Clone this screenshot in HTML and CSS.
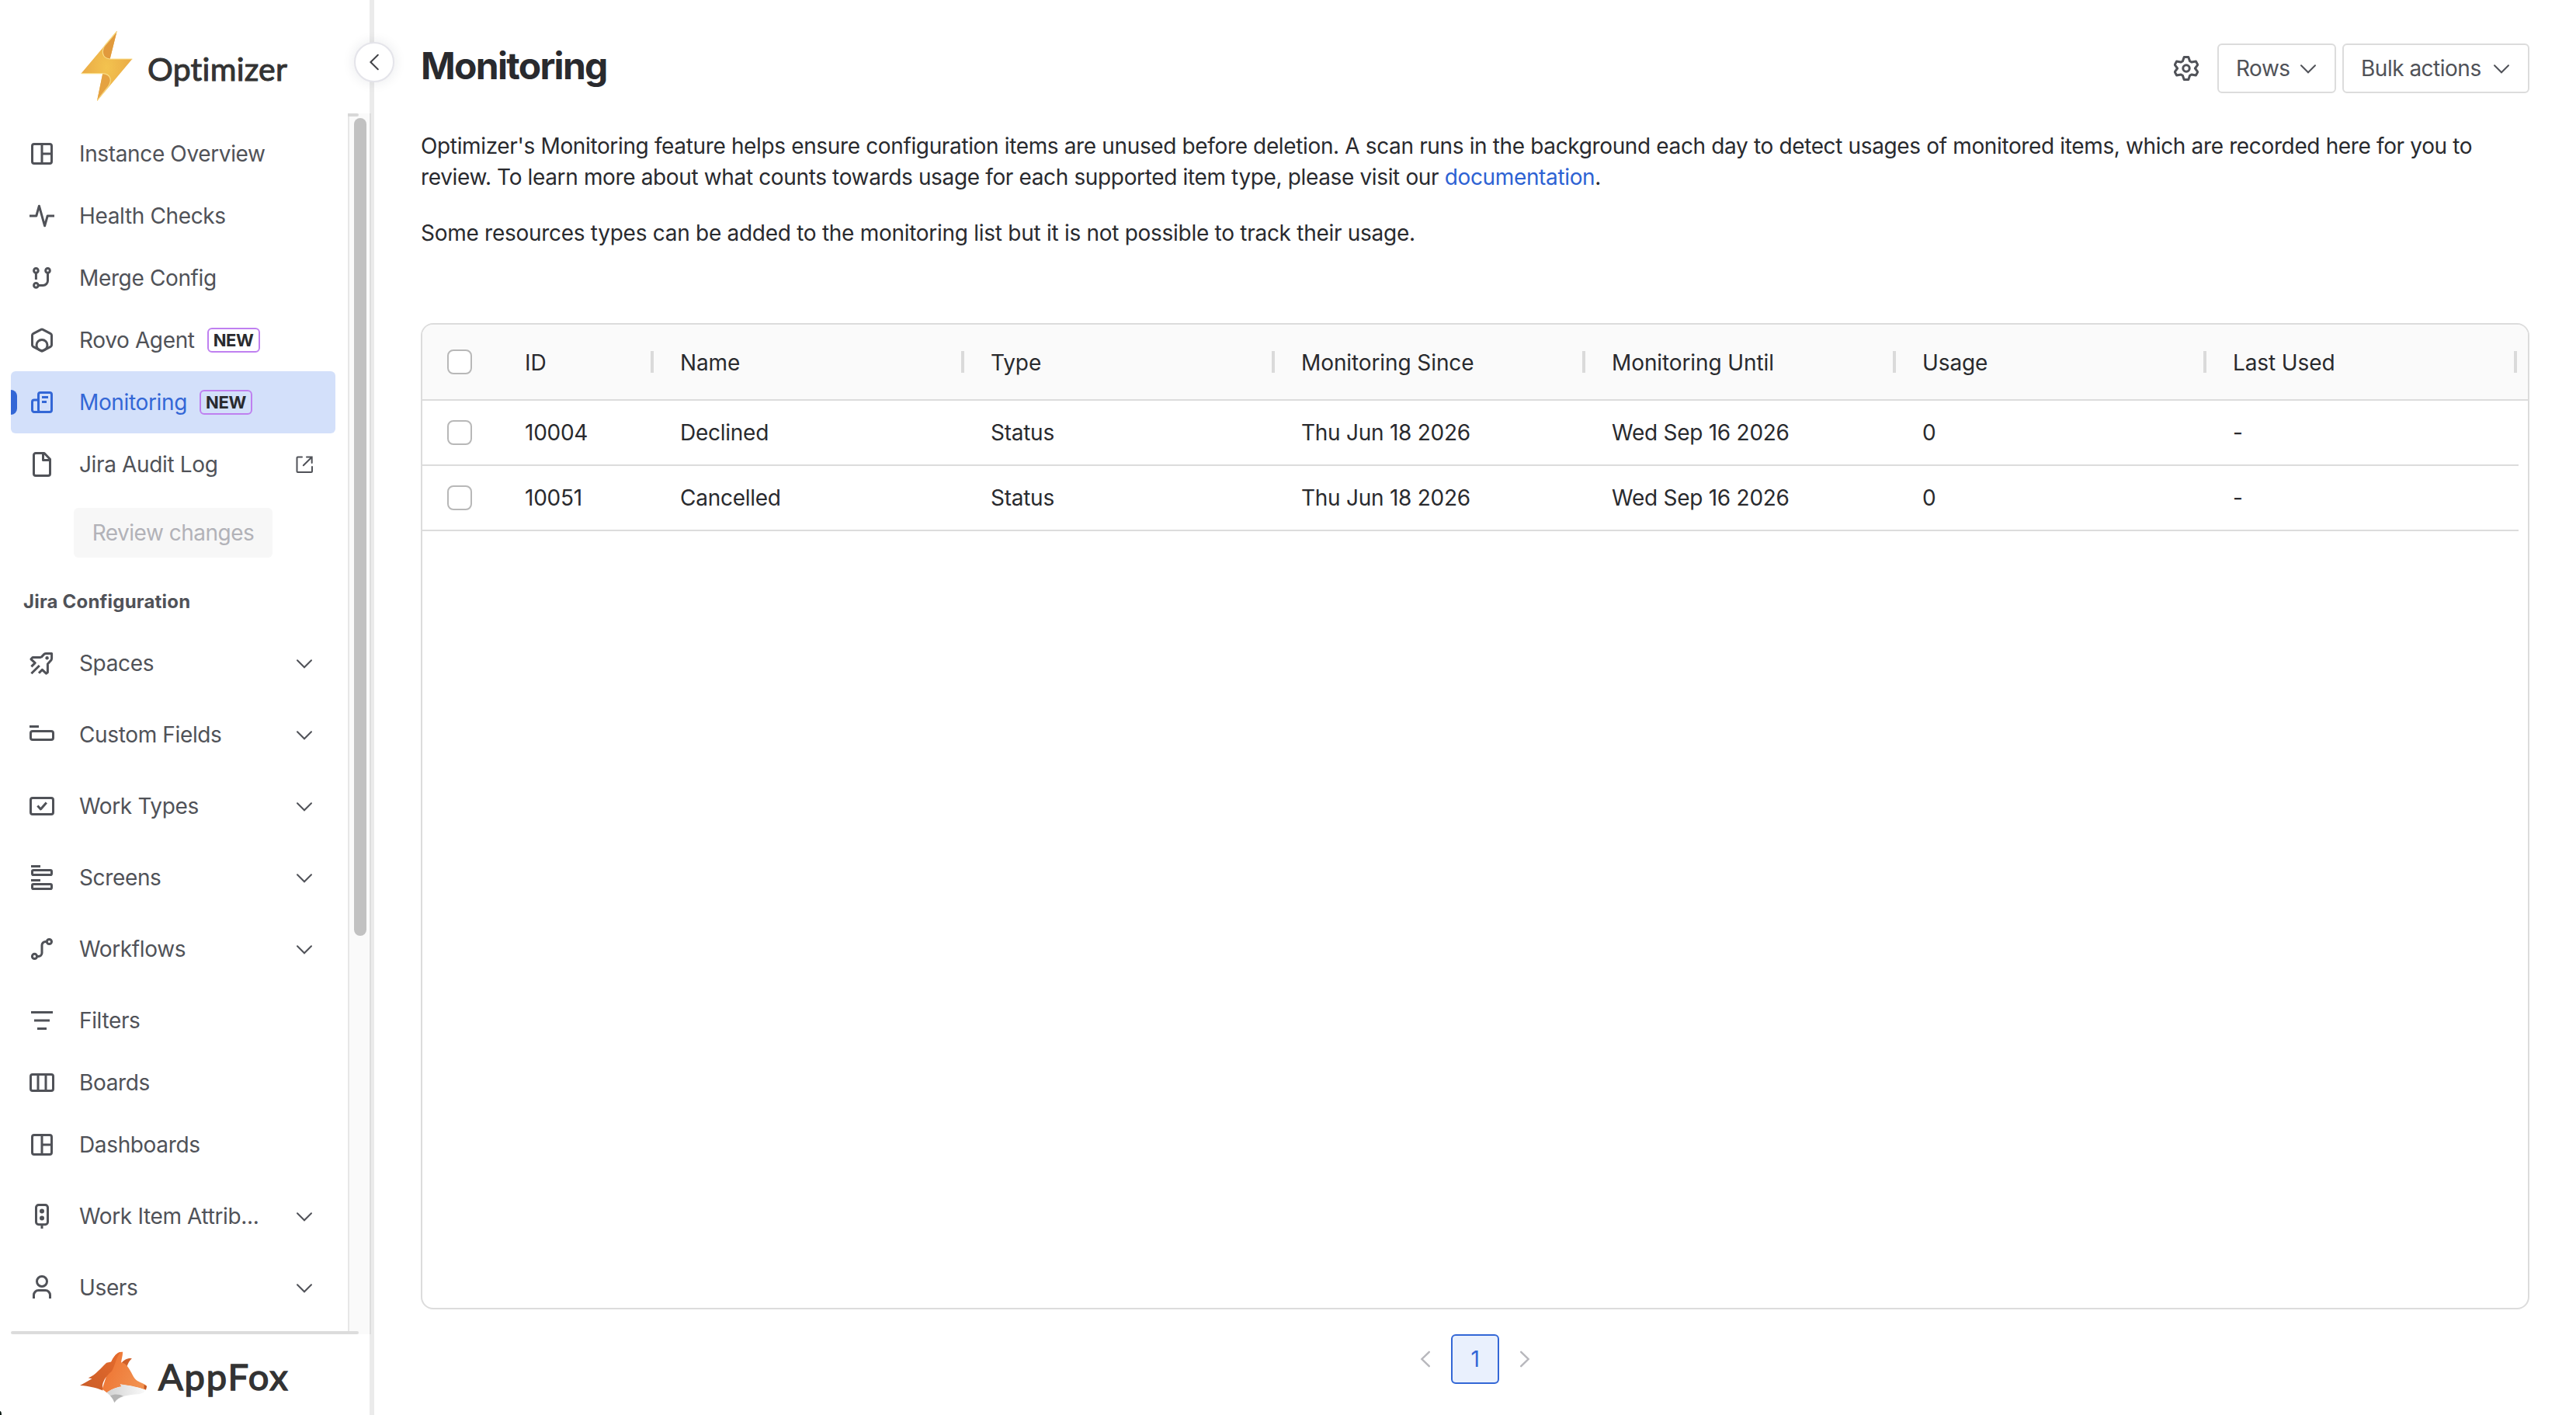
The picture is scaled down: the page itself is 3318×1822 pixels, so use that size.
FILE: index.html
```
<!DOCTYPE html>
<html lang="en">
<head>
  <meta charset="UTF-8">
  <meta name="viewport" content="width=device-width, initial-scale=1">
  <title>Monitoring - Optimizer</title>
  <link rel="stylesheet" href="styles.css">
</head>
<body>
  <!-- Shared icons -->
  <svg class="sprite" aria-hidden="true">
    <symbol id="i-dashboard" viewBox="0 0 16 16"><rect x="1.75" y="1.75" width="12.5" height="12.5" rx="1.25"/><path d="M8 2v12M8 8h6"/></symbol>
    <symbol id="i-down" viewBox="0 0 24 24"><path d="M3 8.3l9 9 9-9"/></symbol>
    <symbol id="i-left" viewBox="0 0 24 24"><path d="M16.8 2.8 7.4 12l9.4 9.2"/></symbol>
    <symbol id="i-right" viewBox="0 0 24 24"><path d="M7.2 2.8l9.4 9.2-9.4 9.2"/></symbol>
  </svg>

  <div class="app">
    <!-- Sidebar -->
    <aside class="sidebar">
      <div class="brand">
        <svg class="bolt" viewBox="0 0 68 90">
          <defs>
            <radialGradient id="boltFill" cx="0.5" cy="0.52" r="0.55">
              <stop offset="0" stop-color="#f3c34f"/>
              <stop offset="1" stop-color="#e9a845"/>
            </radialGradient>
          </defs>
          <path fill="url(#boltFill)" d="M46.6 0 37.6 36H66.3L21 90l7.3-35.4H.6z"/>
          <path fill="#e19a3d" d="M46.6 0 37.6 36C27 35 26.5 24 31 18.5z"/>
          <path fill="#e5a241" d="M28.3 54.6C38 55 41 63 35.5 71L21 90z"/>
          <path fill="none" stroke="#f9dc84" stroke-width="1.2" d="M46 1 32 17.5C26 25 27 35 37.6 36H66M1 54.6H28.3C38 55 41 63 35.5 71L21.5 89"/>
        </svg>
        <span class="brand-name">Optimizer</span>
      </div>

      <div class="menu-area">
        <nav class="menu">
          <a class="item"><svg class="icon"><use href="#i-dashboard"/></svg><span class="label">Instance Overview</span></a>
          <a class="item"><svg class="icon" viewBox="0 0 16 16"><path d="M0 8h4.4L6.2 1.6 9.8 14.4 11.6 8H16"/></svg><span class="label">Health Checks</span></a>
          <a class="item"><svg class="icon" viewBox="0 0 16 16"><circle cx="4.2" cy="3.2" r="1.4"/><circle cx="11.75" cy="3.2" r="1.4"/><circle cx="4.2" cy="12.7" r="1.4"/><path d="M4.2 4.8V9M11.75 4.8v4.9a3 3 0 0 1-3 3H5.8"/></svg><span class="label">Merge Config</span></a>
          <a class="item"><svg class="icon" viewBox="0 0 16 16"><path d="M7.4 1.2a1.2 1.2 0 0 1 1.2 0l5 2.6a1.2 1.2 0 0 1 .65 1.1v6.2a1.2 1.2 0 0 1-.65 1.1l-5 2.7a1.2 1.2 0 0 1-1.2 0l-5-2.7a1.2 1.2 0 0 1-.65-1.1V4.9a1.2 1.2 0 0 1 .65-1.1z"/><circle cx="8" cy="11.2" r="3.5"/></svg><span class="label">Rovo Agent</span><span class="tag">NEW</span></a>
          <a class="item selected"><svg class="icon" viewBox="0 0 16 16"><rect x="5.75" y="1.75" width="8.5" height="12.5" rx="1.25"/><path d="M5.75 6.45H3A1.25 1.25 0 0 0 1.75 7.7V13A1.25 1.25 0 0 0 3 14.25h4M8 4.75h4M8 7.75h3"/></svg><span class="label">Monitoring</span><span class="tag">NEW</span></a>
          <a class="item"><svg class="icon" viewBox="0 0 16 16"><path d="M9.5.75H4A1.25 1.25 0 0 0 2.75 2v12A1.25 1.25 0 0 0 4 15.25h8A1.25 1.25 0 0 0 13.25 14V4.6zM8.75 1v4.25H13"/></svg><span class="label">Jira Audit Log</span><svg class="end-icon" viewBox="0 0 24 24"><path d="M9 2.5H3.5A1 1 0 0 0 2.5 3.5V21a1 1 0 0 0 1 1H21a1 1 0 0 0 1-1V15M15 2.5h6.7V10M10.8 13.3 21.5 2.7"/></svg></a>
          <button class="review" disabled>Review changes</button>
          <h2 class="menu-heading">Jira Configuration</h2>
          <a class="item group"><svg class="icon" viewBox="0 0 16 16"><path d="M7.4 4.3 9.4 2.2a1.8 1.8 0 0 1 1.3-.5h3.6v3.2a2 2 0 0 1-.6 1.4l-2 2.2v5.4l-1 .7-2.5-2.4-2.2 2.2M7.4 4.3H2L1 5.4l2.6 2.4-2.4 2.4M6.4 9.5l-5.2 5.1"/><circle class="dot" cx="11.3" cy="4.6" r="1.1"/></svg><span class="label">Spaces</span><svg class="end-icon"><use href="#i-down"/></svg></a>
          <a class="item group"><svg class="icon" viewBox="0 0 16 16"><path d="M0 2.75h6"/><rect x=".75" y="5.75" width="14.5" height="5.5" rx="1.25"/></svg><span class="label">Custom Fields</span><svg class="end-icon"><use href="#i-down"/></svg></a>
          <a class="item group"><svg class="icon" viewBox="0 0 16 16"><rect x=".75" y="2.75" width="14.5" height="10.5" rx="1.25"/><path d="M5.2 7.8l2 2.2L10.9 5.7"/></svg><span class="label">Work Types</span><svg class="end-icon"><use href="#i-down"/></svg></a>
          <a class="item group"><svg class="icon" viewBox="0 0 16 16"><path d="M1 .75h6M1 9.75h6"/><rect x="1.75" y="3.25" width="12.5" height="3" rx=".8"/><rect x="1.75" y="12.25" width="12.5" height="3" rx=".8"/></svg><span class="label">Screens</span><svg class="end-icon"><use href="#i-down"/></svg></a>
          <a class="item group"><svg class="icon" viewBox="0 0 16 16"><circle cx="12.7" cy="3.25" r="1.55"/><circle cx="3.25" cy="12.7" r="1.55"/><path d="M11.2 3.25h-.9A2.3 2.3 0 0 0 8 5.55v4.9a2.25 2.25 0 0 1-2.25 2.25H4.8"/></svg><span class="label">Workflows</span><svg class="end-icon"><use href="#i-down"/></svg></a>
          <a class="item"><svg class="icon" viewBox="0 0 16 16"><path d="M1 2.75h14M3 8h10M5 13.25h6"/></svg><span class="label">Filters</span></a>
          <a class="item"><svg class="icon" viewBox="0 0 16 16"><rect x=".75" y="2.75" width="14.5" height="10.5" rx="1.25"/><path d="M5.5 3v10M10.5 3v10"/></svg><span class="label">Boards</span></a>
          <a class="item"><svg class="icon"><use href="#i-dashboard"/></svg><span class="label">Dashboards</span></a>
          <a class="item group"><svg class="icon" viewBox="0 0 16 16"><rect x="4.25" y=".75" width="7.5" height="12.6" rx="1.6"/><circle class="dot" cx="8" cy="4.7" r="1.5"/><circle class="dot" cx="8" cy="9.2" r="1.5"/><path d="M8 13.4V16"/></svg><span class="label">Work Item Attrib...</span><svg class="end-icon"><use href="#i-down"/></svg></a>
          <a class="item group"><svg class="icon" viewBox="0 0 16 16"><circle cx="8" cy="4" r="3.25"/><path d="M2.75 15v-2.2a3 3 0 0 1 3-3h4.5a3 3 0 0 1 3 3V15"/></svg><span class="label">Users</span><svg class="end-icon"><use href="#i-down"/></svg></a>
        </nav>
        <div class="scrollbar"><div class="thumb"></div></div>
      </div>

      <div class="vendor">
        <svg class="fox" viewBox="310 722 256 196">
          <defs>
            <linearGradient id="foxFace" x1="0" x2="1" y1="0" y2="0.4">
              <stop offset="0" stop-color="#ee6f2d"/>
              <stop offset="1" stop-color="#f19150"/>
            </linearGradient>
            <linearGradient id="foxBack" x1="1" x2="0" y1="0" y2="1">
              <stop offset="0" stop-color="#e66b2c"/>
              <stop offset="1" stop-color="#c95c28"/>
            </linearGradient>
            <linearGradient id="foxJaw" x1="0" x2="1" y1="0" y2="0">
              <stop offset="0" stop-color="#d2d2d2"/>
              <stop offset="1" stop-color="#fafafa"/>
            </linearGradient>
          </defs>
          <path fill="#cf6029" d="M468 768C478 754 494 746 509 749c-10 8-14 18-19 30z"/>
          <path fill="url(#foxFace)" d="M430 762C440 740 455 722 474 724c0 16-5 28-6 40 10 2 18 6 24 16 16 19 22 46 38 55 16 9 30 12 36 20l-4 15c-26-10-60-16-98-22l6 9c-22 2-42 12-57 23l-18-14z"/>
          <path fill="url(#foxBack)" d="M310 853l46-26-14-3c30-12 48-39 70-58l18-4c10-22 22-36 36-38-20 26-20 50-34 74-24 20-42 46-34 74-26-10-52-17-88-19z"/>
          <path fill="#c25621" d="M556 850l10 6-3 14-7-5z"/>
          <path fill="url(#foxJaw)" d="M413 880c15-11 35-21 57-23l-6-9c36 4 72 10 98 22-6 9-12 15-30 16-34 2-70 6-90 32-4-14-16-28-29-38z"/>
          <path fill="#b4b4b4" d="M426 892c18-8 36-6 50 2-14 4-26 12-34 24-4-10-8-18-16-26z"/>
        </svg>
        <span class="vendor-name">AppFox</span>
      </div>
      <button class="collapse"><svg><use href="#i-left"/></svg></button>
      <span class="corner"></span>
    </aside>

    <!-- Content -->
    <main class="content">
      <header class="page-header">
        <h1>Monitoring</h1>
        <div class="actions">
          <svg class="icon gear" viewBox="0 0 16 16"><circle cx="8" cy="8" r="2.1"/><path d="M6.6.75h2.8l.9 2.6 1.1.65 2.8-.5 1.2 2.2L13.7 8l1.7 2.3-1.2 2.2-2.8-.5-1.1.65-.9 2.6H6.6l-.9-2.6-1.1-.65-2.8.5L.6 10.3 2.3 8 .6 5.7l1.2-2.2 2.8.5 1.1-.65z"/></svg>
          <button class="btn rows">Rows <svg><use href="#i-down"/></svg></button>
          <button class="btn bulk">Bulk actions <svg><use href="#i-down"/></svg></button>
        </div>
      </header>

      <div class="intro">
        <p>Optimizer's Monitoring feature helps ensure configuration items are unused before deletion. A scan runs in the background each day to detect usages of monitored items, which are recorded here for you to<br>review. To learn more about what counts towards usage for each supported item type, please visit our <a class="link">documentation</a>.</p>
        <p>Some resources types can be added to the monitoring list but it is not possible to track their usage.</p>
      </div>

      <div class="grid">
        <div class="row head">
          <div class="cell check"><span class="checkbox"></span></div>
          <div class="cell">ID</div>
          <div class="cell">Name</div>
          <div class="cell">Type</div>
          <div class="cell">Monitoring Since</div>
          <div class="cell">Monitoring Until</div>
          <div class="cell">Usage</div>
          <div class="cell">Last Used</div>
        </div>
        <div class="row">
          <div class="cell check"><span class="checkbox"></span></div>
          <div class="cell">10004</div>
          <div class="cell">Declined</div>
          <div class="cell">Status</div>
          <div class="cell">Thu Jun 18 2026</div>
          <div class="cell">Wed Sep 16 2026</div>
          <div class="cell">0</div>
          <div class="cell">-</div>
        </div>
        <div class="row">
          <div class="cell check"><span class="checkbox"></span></div>
          <div class="cell">10051</div>
          <div class="cell">Cancelled</div>
          <div class="cell">Status</div>
          <div class="cell">Thu Jun 18 2026</div>
          <div class="cell">Wed Sep 16 2026</div>
          <div class="cell">0</div>
          <div class="cell">-</div>
        </div>
      </div>

      <div class="pagination">
        <svg><use href="#i-left"/></svg>
        <span class="page">1</span>
        <svg><use href="#i-right"/></svg>
      </div>
    </main>
  </div>
</body>
</html>
```
FILE: styles.css
```
* {
  margin: 0;
  padding: 0;
  box-sizing: border-box;
}

html, body {
  height: 100%;
  overflow: hidden;
}

body {
  font-family: Inter, "Liberation Sans", sans-serif;
  font-size: 28px;
  line-height: 40px;
  letter-spacing: -0.36px;
  color: #292a2e;
  background: #fff;
}

button {
  font: inherit;
  letter-spacing: inherit;
  border: none;
  background: none;
}

svg {
  flex: none;
  fill: none;
  stroke: currentColor;
  stroke-width: 2;
  stroke-linecap: round;
}

.sprite {
  position: absolute;
  width: 0;
  height: 0;
}

.app {
  display: flex;
  height: 100vh;
}

/* === SIDEBAR === */
.sidebar {
  position: relative;
  flex: none;
  display: flex;
  flex-direction: column;
  width: 482px;
  border-right: 6px solid #ebebeb;
  color: #505258;
}

.brand {
  display: flex;
  height: 146px;
  padding: 40px 0 0 104px;
}

.bolt {
  width: 68px;
  height: 90px;
  stroke: none;
}

.brand-name,
.vendor-name {
  font-family: Lato, sans-serif;
  color: #333;
  -webkit-text-stroke: 1px #333;
}

.brand-name {
  margin: 24px 0 0 18px;
  font-size: 41px;
  line-height: 50px;
  letter-spacing: 0.25px;
}

.menu-area {
  display: flex;
  height: 1572px;
}

.menu {
  flex: 1;
  padding: 12px 16px 0 14px;
}

.item {
  position: relative;
  display: flex;
  align-items: center;
  height: 80px;
  padding: 0 28px 0 24px;
  border-radius: 6px;
}

.group {
  margin: 12px 0;
}

.icon {
  width: 32px;
  height: 32px;
  stroke-width: 1.5;
  stroke-linecap: butt;
  stroke-linejoin: round;
}

.icon .dot {
  fill: currentColor;
  stroke: none;
}

.label {
  margin-left: 32px;
  white-space: nowrap;
}

.end-icon {
  width: 24px;
  height: 24px;
  margin-left: auto;
}

.tag {
  margin-left: 16px;
  padding: 0 6px;
  border: 2px solid #bf80f0;
  border-radius: 6px;
  font-size: 22px;
  font-weight: 700;
  line-height: 28px;
  color: #292a2e;
}

.selected {
  background: #d3e0fa;
  color: #3367d6;
}

.selected::before {
  content: "";
  position: absolute;
  left: 0;
  width: 8px;
  height: 32px;
  border-radius: 0 8px 8px 0;
  background: #3367d6;
}

.review {
  display: block;
  width: 256px;
  height: 64px;
  margin: 16px auto 0;
  border-radius: 6px;
  background: #f7f7f7;
  color: #b2b2b8;
  letter-spacing: -0.5px;
}

.menu-heading {
  height: 84px;
  padding: 43px 0 0 16px;
  font-size: 24px;
  font-weight: 700;
  line-height: 28px;
  letter-spacing: 0.2px;
}

.scrollbar {
  position: relative;
  width: 30px;
  margin-right: -2px;
  padding: 6px 6px 0;
  border-left: 2px solid #e7e7e7;
  border-right: 2px solid #dedede;
  background: #fafafa;
}

/* end of the rule above the menu */
.scrollbar::before {
  content: "";
  position: absolute;
  top: 0;
  left: -2px;
  width: 14px;
  height: 4px;
  border-radius: 0 2px 2px 0;
  background: #d8d8d8;
}

.thumb {
  position: relative;
  width: 16px;
  height: 1053px;
  border-radius: 8px;
  background: #c1c1c1;
}

.vendor {
  position: relative;
  display: flex;
  padding: 22px 0 0 103px;
}

.vendor::before {
  content: "";
  position: absolute;
  top: -4px;
  left: 14px;
  width: 448px;
  height: 4px;
  border-radius: 2px;
  background: #dcdcdc;
}

.fox {
  width: 86px;
  height: 66px;
  stroke: none;
}

.vendor-name {
  margin: 4px 0 0 15px;
  font-size: 47px;
  line-height: 56px;
  letter-spacing: 1.9px;
  -webkit-text-stroke-width: 1.5px;
}

.collapse {
  position: absolute;
  top: 54px;
  left: 456px;
  display: flex;
  align-items: center;
  justify-content: center;
  width: 52px;
  height: 52px;
  border: 2px solid #e4e4ea;
  border-radius: 50%;
  background: #fff;
  box-shadow: 0 0 16px rgba(30, 40, 60, 0.1);
  color: #404146;
}

.collapse svg {
  width: 24px;
  height: 24px;
}

/* dark sliver of the window corner */
.corner {
  position: absolute;
  left: 0;
  bottom: 0;
  width: 2px;
  height: 5px;
  border-top-right-radius: 2px 5px;
  background: #0c1a14;
}

/* === PAGE HEADER === */
.content {
  flex: 1;
  display: flex;
  flex-direction: column;
  padding: 56px 60px 0;
}

.page-header {
  display: flex;
  justify-content: space-between;
  height: 64px;
}

h1 {
  padding-top: 1px;
  font-size: 48px;
  font-weight: 700;
  line-height: 56px;
  letter-spacing: -1.7px;
}

.actions {
  display: flex;
  align-items: center;
  gap: 8px;
  color: #505258;
}

.gear {
  margin-right: 16px;
}

.btn {
  display: flex;
  align-items: center;
  justify-content: space-between;
  height: 64px;
  padding: 0 22px;
  border: 2px solid #dcdcdc;
  border-radius: 6px;
  color: #505258;
  letter-spacing: -0.5px;
}

.btn svg {
  width: 24px;
  height: 24px;
}

.rows {
  width: 153px;
}

.bulk {
  width: 241px;
}

.intro {
  display: flex;
  flex-direction: column;
  gap: 32px;
  padding: 48px 0 96px;
  white-space: nowrap;
}

.intro p + p {
  letter-spacing: -0.28px;
}

.link {
  color: #2d62d3;
}

/* === GRID === */
.grid {
  height: 1270px;
  border: 2px solid #dcdcdc;
  border-radius: 16px;
  overflow: hidden;
}

.row {
  display: grid;
  grid-template-columns: 100px 200px repeat(6, 400px);
  align-items: center;
  width: 2700px;
  height: 84px;
  border-bottom: 2px solid #dcdcdc;
  letter-spacing: -0.26px;
}

.head {
  width: auto;
  height: 98px;
  background: #fafafa;
  letter-spacing: -0.1px;
}

.cell {
  position: relative;
  padding-left: 32px;
}

.head .cell:not(.check) {
  padding-top: 2px;
}

.head .cell:not(.check)::after {
  content: "";
  position: absolute;
  top: 7px;
  right: 2px;
  width: 4px;
  height: 28px;
  background: #dadada;
}

.checkbox {
  display: block;
  width: 32px;
  height: 32px;
  border: 2px solid #b8b8b8;
  border-radius: 8px;
  background: #fff;
}

/* === PAGINATION === */
.pagination {
  display: flex;
  align-items: center;
  justify-content: center;
  gap: 21px;
  padding-top: 32px;
  color: #b7b7bc;
}

.pagination svg {
  width: 24px;
  height: 24px;
  stroke-width: 2.4;
}

.page {
  width: 62px;
  height: 64px;
  border: 2px solid #3367d6;
  border-radius: 6px;
  background: #e9f0fd;
  color: #3367d6;
  line-height: 60px;
  text-align: center;
}
```
